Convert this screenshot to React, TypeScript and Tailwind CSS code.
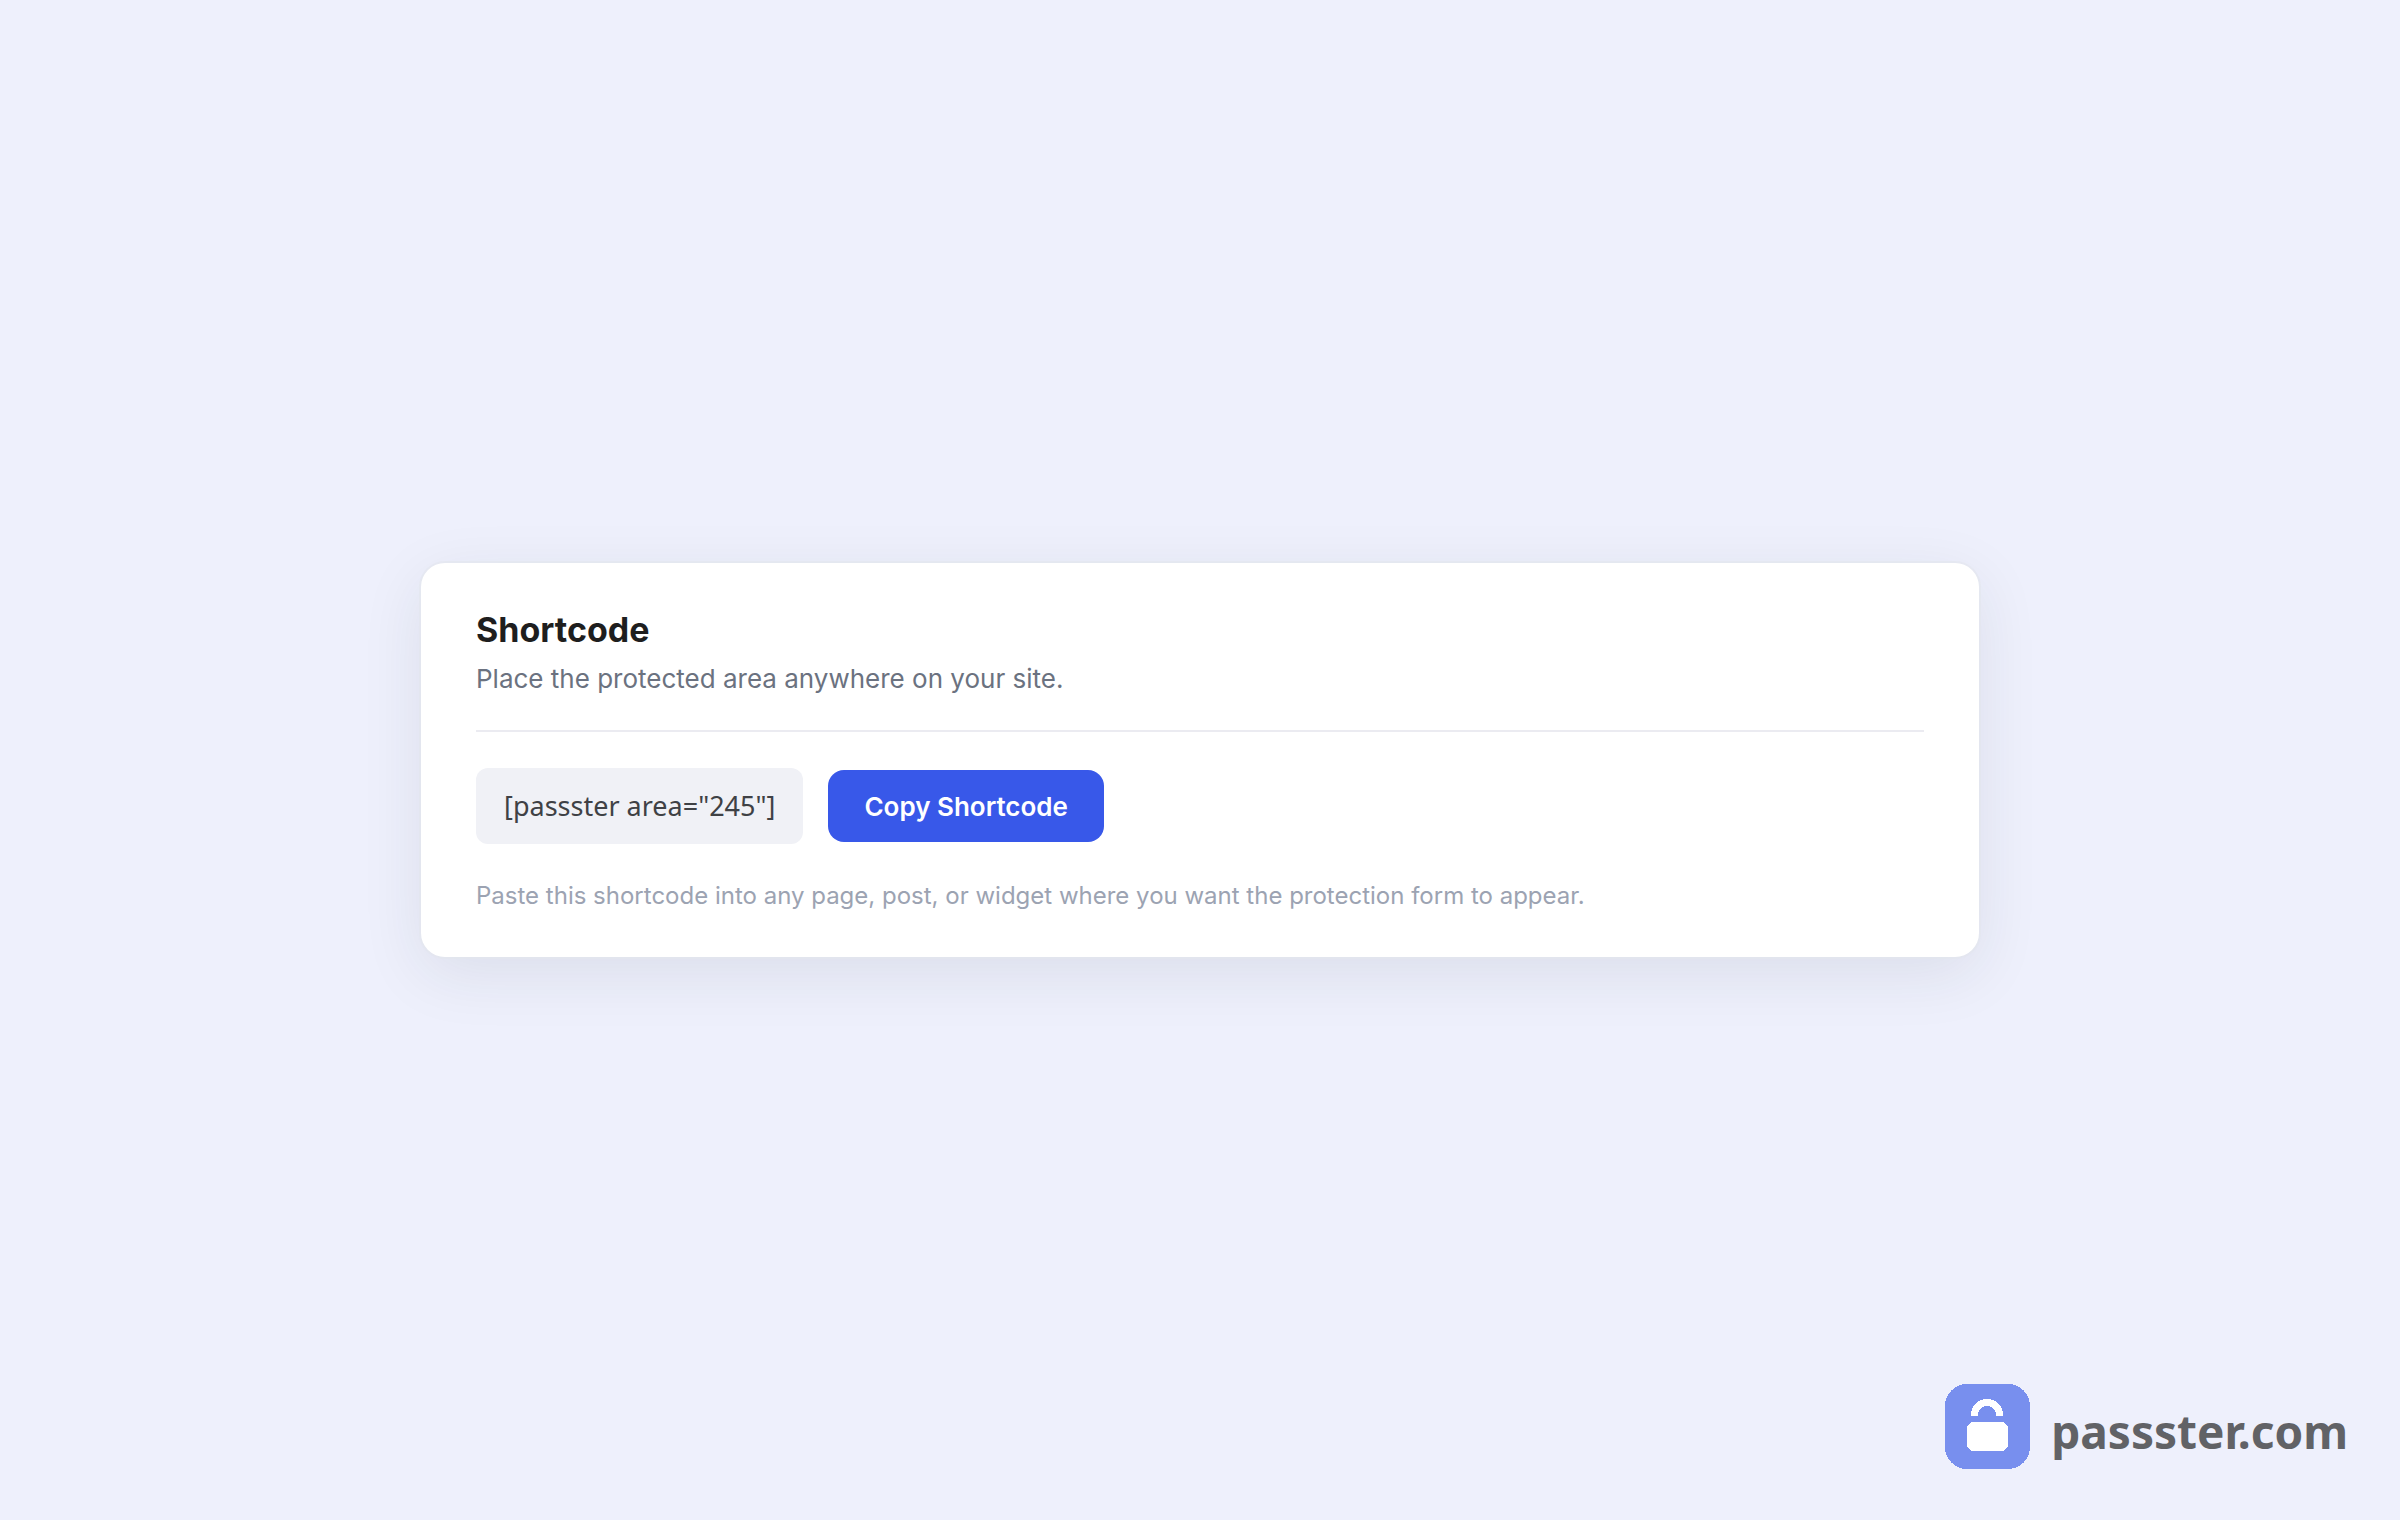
const BrandIcon = () => (
  <svg viewBox="0 0 85 85" className="size-[85px]" shapeRendering="crispEdges" aria-hidden="true">
    <rect width="85" height="85" rx="22" fill="#788fee" />
    <path d="M29.5 32 V31 A12.5 12.5 0 0 1 54.5 31 V32" fill="none" stroke="#fff" strokeWidth="7" />
    <path d="M26.500 38H58.500L63 42.500V62.500L58.500 67H26.500L22 62.500V42.500Z" fill="#fff" />
  </svg>
);

export default function App() {
  return (
    <div className="grid min-h-screen grid-rows-[1fr_auto_1fr] bg-[#eef0fc] font-['Inter',sans-serif]">
      <main className="row-start-2 mx-auto w-full max-w-[1558px] rounded-3xl bg-white px-[55px] pt-[42px] pb-[41px] shadow-[0_0_0_2px_rgba(226,230,236,0.6),0_16px_64px_rgba(30,41,59,0.09)]">
        <header className="border-b-2 border-[#ebebf1] pb-[31px]">
          <h1 className="text-[34px] leading-[50px] font-bold text-[#1e1e1e]">Shortcode</h1>
          <p className="mt-1 text-[26px] leading-10 text-[#6b7280]">
            Place the protected area anywhere on your site.
          </p>
        </header>
        <div className="mt-9 flex flex-wrap items-center gap-[25px]">
          <code className="rounded-[12px] bg-[#f0f1f6] px-7 py-4 font-['Noto_Sans',sans-serif] text-[27px] leading-[44px] text-[#3f4145]">
            [passster area="245"]
          </code>
          <button
            type="button"
            className="rounded-[16px] bg-[#3858e9] px-9 pt-[17px] pb-[15px] text-[26px] leading-10 font-semibold text-white"
          >
            Copy Shortcode
          </button>
        </div>
        <p className="mt-8 text-[24px] leading-10 text-[#9ca3b2]">
          Paste this shortcode into any page, post, or widget where you want the protection form to appear.
        </p>
      </main>
      <footer className="row-start-3 flex items-end justify-end gap-[21px] pr-[52px] pb-[51px]">
        <BrandIcon />
        <span className="font-['Noto_Sans',sans-serif] text-[46px] leading-[75px] font-bold text-[#616266]">
          passster.com
        </span>
      </footer>
    </div>
  );
}
